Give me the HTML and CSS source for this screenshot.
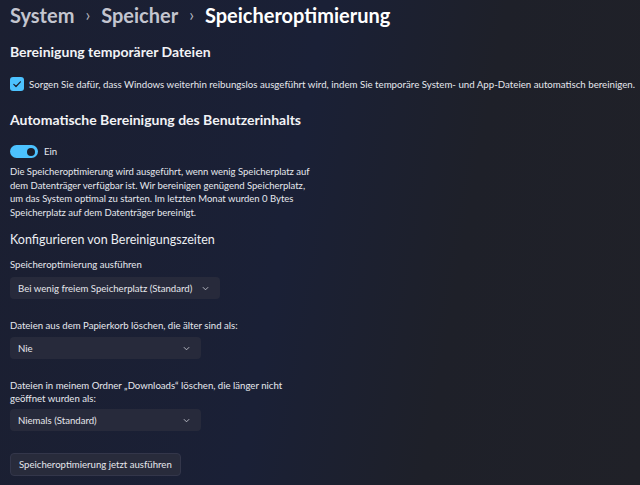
FILE: index.html
```html
<!DOCTYPE html>
<html lang="de">
<head>
<meta charset="utf-8">
<link rel="stylesheet" href="styles.css">
</head>
<body>
<div class="page">
  <header class="crumbs">
    <span class="crumb">System</span>
    <span class="sep">›</span>
    <span class="crumb">Speicher</span>
    <span class="sep">›</span>
    <span class="crumb current">Speicheroptimierung</span>
  </header>

  <h2 class="h-temp">Bereinigung temporärer Dateien</h2>
  <label class="check-row">
    <span class="checkbox">
      <svg viewBox="0 0 14 14" width="14" height="14"><path d="M3.8 7.4 L6 9.5 L10.4 4.8" fill="none" stroke="#1a1d2c" stroke-width="1.2" stroke-linecap="round" stroke-linejoin="round"/></svg>
    </span>
    <span class="check-text">Sorgen Sie dafür, dass Windows weiterhin reibungslos ausgeführt wird, indem Sie temporäre System- und App-Dateien automatisch bereinigen.</span>
  </label>

  <h2 class="h-auto">Automatische Bereinigung des Benutzerinhalts</h2>
  <div class="toggle-row">
    <span class="toggle"><span class="knob"></span></span>
    <span class="toggle-label">Ein</span>
  </div>
  <p class="desc">Die Speicheroptimierung wird ausgeführt, wenn wenig Speicherplatz auf<br>dem Datenträger verfügbar ist. Wir bereinigen genügend Speicherplatz,<br>um das System optimal zu starten. Im letzten Monat wurden 0 Bytes<br>Speicherplatz auf dem Datenträger bereinigt.</p>

  <h3 class="h-config">Konfigurieren von Bereinigungszeiten</h3>

  <div class="field f1">
    <div class="field-label">Speicheroptimierung ausführen</div>
    <div class="select s-wide"><span>Bei wenig freiem Speicherplatz (Standard)</span><svg class="chev" viewBox="0 0 8 5" width="7" height="5"><path d="M1 1 L4 4 L7 1" fill="none" stroke="#c8cad2" stroke-width="1"/></svg></div>
  </div>

  <div class="field f2">
    <div class="field-label">Dateien aus dem Papierkorb löschen, die älter sind als:</div>
    <div class="select s-mid"><span>Nie</span><svg class="chev" viewBox="0 0 8 5" width="7" height="5"><path d="M1 1 L4 4 L7 1" fill="none" stroke="#c8cad2" stroke-width="1"/></svg></div>
  </div>

  <div class="field f3">
    <div class="field-label two">Dateien in meinem Ordner „Downloads“ löschen, die länger nicht<br>geöffnet wurden als:</div>
    <div class="select s-mid"><span>Niemals (Standard)</span><svg class="chev" viewBox="0 0 8 5" width="7" height="5"><path d="M1 1 L4 4 L7 1" fill="none" stroke="#c8cad2" stroke-width="1"/></svg></div>
  </div>

  <button class="run-btn">Speicheroptimierung jetzt ausführen</button>
</div>
</body>
</html>
```

FILE: styles.css
```css
html, body {
  margin: 0;
  padding: 0;
  height: 100%;
}
body {
  width: 640px;
  height: 485px;
  overflow: hidden;
  background: linear-gradient(100deg, #1b1f31 0%, #1a2036 45%, #1e2029 70%, #202128 100%);
  font-family: Lato, "Liberation Sans", sans-serif;
  color: #e6e8ee;
}
.page {
  padding: 0 10px;
  display: flex;
  flex-direction: column;
}
.crumbs {
  display: flex;
  align-items: center;
  gap: 11px;
  height: 30px;
  font-size: 20px;
  font-weight: 700;
  line-height: 28px;
}
.crumb { color: #c3c5cf; }
.crumb.current { color: #ffffff; }
.sep {
  color: #b0b3bd;
  font-size: 17px;
  font-weight: 400;
  line-height: 28px;
}

h2, h3, p { margin: 0; }

.h-temp {
  margin-top: 12px;
  font-size: 14px;
  font-weight: 700;
  line-height: 20px;
  color: #f2f3f6;
}
.check-row {
  margin-top: 15px;
  display: flex;
  align-items: center;
  gap: 5px;
  height: 14px;
}
.checkbox {
  width: 14px;
  height: 14px;
  border-radius: 3px;
  background: #4cc2ff;
  display: flex;
  flex: none;
}
.check-text {
  font-size: 9.7px;
  line-height: 14px;
  white-space: nowrap;
}
.h-auto {
  margin-top: 19px;
  font-size: 14px;
  font-weight: 700;
  line-height: 20px;
  color: #f2f3f6;
}
.toggle-row {
  margin-top: 15px;
  display: flex;
  align-items: center;
  gap: 6px;
  height: 13px;
}
.toggle {
  width: 28px;
  height: 13px;
  border-radius: 7px;
  background: #4cc2ff;
  display: flex;
  align-items: center;
  justify-content: flex-end;
  padding-right: 3px;
  box-sizing: border-box;
}
.knob {
  width: 8px;
  height: 8px;
  border-radius: 50%;
  background: #1b1e2c;
}
.toggle-label { font-size: 9.6px; }
.desc {
  margin-top: 7px;
  font-size: 9.5px;
  line-height: 13.5px;
  white-space: nowrap;
}
.h-config {
  margin-top: 12px;
  font-size: 12.5px;
  font-weight: 400;
  line-height: 18px;
  color: #eceef2;
}
.field { display: flex; flex-direction: column; }
.f1 { margin-top: 9px; }
.f2 { margin-top: 20px; }
.f3 { margin-top: 20px; }
.field-label {
  font-size: 9.6px;
  line-height: 14px;
  white-space: nowrap;
}
.field-label.two { line-height: 13px; }
.select {
  margin-top: 5px;
  height: 22px;
  box-sizing: border-box;
  background: #272a3b;
  border-radius: 4px;
  display: flex;
  align-items: center;
  justify-content: space-between;
  padding: 0 11px 0 8px;
  font-size: 9.6px;
  color: #e6e7ec;
  white-space: nowrap;
}
.f2 .select, .f3 .select { margin-top: 4px; }
.s-wide { width: 210px; }
.s-mid { width: 191px; }
.chev { flex: none; }
.run-btn {
  margin-top: 22px;
  align-self: flex-start;
  height: 23px;
  background: #282b3b;
  border: 1px solid #33364a;
  border-radius: 4px;
  color: #e6e7ec;
  font-family: inherit;
  font-size: 9.6px;
  padding: 0 8px;
  white-space: nowrap;
}
```
